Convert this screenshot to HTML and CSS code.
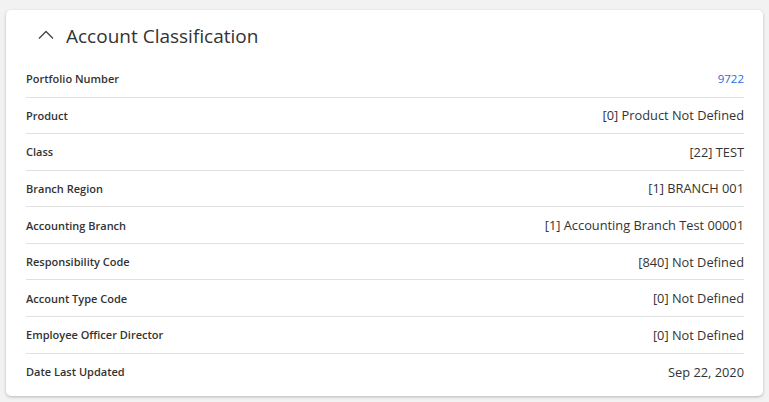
FILE: index.html
```html
<!DOCTYPE html>
<html>
<head>
<meta charset="utf-8">
<link rel="stylesheet" href="styles.css">
</head>
<body>
<section class="card">
  <header class="card-header">
    <svg class="chevron" width="16" height="10" viewBox="0 0 16 10"><polyline points="1,8.5 8,1.5 15,8.5" fill="none" stroke="#444" stroke-width="1.3"/></svg>
    <h2 class="title">Account Classification</h2>
  </header>
  <div class="rows">
    <div class="row"><span class="label">Portfolio Number</span><a class="value link">9722</a></div>
    <div class="row"><span class="label">Product</span><span class="value">[0] Product Not Defined</span></div>
    <div class="row"><span class="label">Class</span><span class="value">[22] TEST</span></div>
    <div class="row"><span class="label">Branch Region</span><span class="value">[1] BRANCH 001</span></div>
    <div class="row"><span class="label">Accounting Branch</span><span class="value">[1] Accounting Branch Test 00001</span></div>
    <div class="row"><span class="label">Responsibility Code</span><span class="value">[840] Not Defined</span></div>
    <div class="row"><span class="label">Account Type Code</span><span class="value">[0] Not Defined</span></div>
    <div class="row"><span class="label">Employee Officer Director</span><span class="value">[0] Not Defined</span></div>
    <div class="row"><span class="label">Date Last Updated</span><span class="value">Sep 22, 2020</span></div>
  </div>
</section>
</body>
</html>
```
FILE: styles.css
```css
html, body { margin: 0; padding: 0; }
body {
  background: #f2f2f2;
  font-family: "Open Sans", "Noto Sans", sans-serif;
  color: #333;
  padding: 10px 6px 5px 6px;
}
.card {
  background: #fff;
  border-radius: 5px;
  box-shadow: 0 1px 3px rgba(0,0,0,0.25);
  padding: 0 19px 6px 20px;
}
.card-header {
  height: 51px;
  display: flex;
  align-items: center;
  padding-left: 12px;
}
.chevron { margin-right: 12px; margin-top: -2px; }
.title {
  margin: 0;
  font-size: 19px;
  font-weight: 400;
  color: #333;
}
.row {
  height: 36.57px;
  box-sizing: border-box;
  display: flex;
  align-items: center;
  justify-content: space-between;
  border-bottom: 1px solid #e0e0e0;
}
.row:last-child { border-bottom: none; }
.label {
  font-size: 11px;
  font-weight: 600;
  color: #333;
}
.value {
  font-size: 12.8px;
  color: #333;
}
.link { color: #2c6bd8; font-size: 11.5px; }
```
